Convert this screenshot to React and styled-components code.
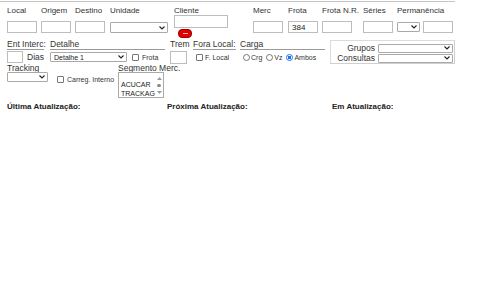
import React from "react";
import styled, { createGlobalStyle } from "styled-components";

const GlobalStyle = createGlobalStyle`
  html, body { margin: 0; padding: 0; background: #fff; }
  body {
    font-family: "Liberation Sans", Arial, sans-serif;
    font-size: 8px;
    color: #333;
  }
  * { box-sizing: border-box; }
`;

const TopLine = styled.div`
  width: 455px;
  height: 1px;
  margin-top: 1px;
  background: #c4c4c4;
`;

const Page = styled.div`
  padding-left: 7px;
`;

const Row = styled.div`
  display: flex;
  align-items: flex-start;
  margin-top: ${(p) => p.$mt || 0}px;
`;

const Cell = styled.div`
  flex: none;
  width: ${(p) => (p.$w ? `${p.$w}px` : "auto")};
  display: flex;
  flex-direction: column;
  align-items: flex-start;
`;

const Label = styled.div`
  height: 10px;
  line-height: 10px;
  white-space: nowrap;
`;

const Header = styled.div`
  height: 10px;
  line-height: 9px;
  white-space: nowrap;
  width: ${(p) => (p.$w ? `${p.$w}px` : "auto")};
  border-bottom: ${(p) => (p.$line ? "1px solid #9a9a9a" : "none")};
  font-size: 8.5px;
`;

const SmallLabel = styled.div`
  height: 8px;
  line-height: 8px;
  white-space: nowrap;
  font-size: 8.5px;
`;

const TextBox = styled.input`
  width: ${(p) => p.$w}px;
  height: ${(p) => p.$h || 12}px;
  margin-top: ${(p) => p.$mt || 0}px;
  border: 1px solid #bdbdbd;
  background: #fff;
  padding: 0 3px;
  font: 8px "Liberation Sans", Arial, sans-serif;
  color: #222;
  outline: none;
`;

const SelectBox = styled.div`
  width: ${(p) => p.$w}px;
  height: ${(p) => p.$h || 10}px;
  margin-top: ${(p) => p.$mt || 0}px;
  border: 1px solid #a9a9a9;
  border-radius: 1px;
  background: #fff;
  display: flex;
  align-items: center;
  justify-content: space-between;
  padding: 0 2px 0 3px;
  font-size: 7px;
  color: #222;
  flex: none;
`;

const Chevron = () => (
  <svg width="6" height="4" viewBox="0 0 6 4">
    <path d="M0.5 0.5 L3 3 L5.5 0.5" fill="none" stroke="#222" strokeWidth="1.1" />
  </svg>
);

const Select = ({ w, h, mt, children }) => (
  <SelectBox $w={w} $h={h} $mt={mt}>
    <span>{children}</span>
    <Chevron />
  </SelectBox>
);

const RedButton = styled.div`
  width: 14px;
  height: 9px;
  margin-top: 1px;
  margin-left: 4px;
  border-radius: 4px;
  background: #e00000;
  border: 1px solid #a00000;
  display: flex;
  align-items: center;
  justify-content: center;
  &::after {
    content: "";
    width: 5px;
    height: 1px;
    background: #ffb0b0;
  }
`;

const PairRow = styled.div`
  display: flex;
  gap: 3px;
  margin-top: 5px;
  align-items: center;
`;

const Controls = styled.div`
  height: 14px;
  display: flex;
  align-items: center;
  white-space: nowrap;
`;

const Check = styled.span`
  flex: none;
  width: 7px;
  height: 7px;
  border: 1px solid #767676;
  border-radius: 1px;
  background: #fff;
  margin-left: ${(p) => p.$ml || 0}px;
`;

const Radio = styled.span`
  flex: none;
  width: 7px;
  height: 7px;
  border-radius: 50%;
  border: 1px solid ${(p) => (p.$on ? "#1a73e8" : "#767676")};
  background: ${(p) => (p.$on ? "radial-gradient(circle, #1a73e8 0 1.6px, #fff 2px)" : "#fff")};
  margin-left: ${(p) => p.$ml || 0}px;
`;

const Small = styled.span`
  font-size: 7px;
  margin-left: ${(p) => p.$ml || 0}px;
  color: #333;
`;

const Text = styled.span`
  font-size: 8.5px;
  margin-left: ${(p) => p.$ml || 0}px;
`;

const GroupBox = styled.div`
  width: 125px;
  height: 24px;
  border: 1px solid #dcdcdc;
  border-right-color: #cfcfcf;
  border-bottom-color: #cfcfcf;
  padding: 2px 1px 0 0;
  display: flex;
  flex-direction: column;
`;

const GroupRow = styled.div`
  display: flex;
  align-items: center;
  height: 10px;
`;

const GroupLabel = styled.span`
  width: 45px;
  text-align: right;
  padding-right: 0;
  margin-right: 3px;
  font-size: 8.5px;
  line-height: 9px;
`;

const ListBox = styled.div`
  width: 46px;
  height: 26px;
  border: 1px solid #a9a9a9;
  background: #fff;
  display: flex;
`;

const ListItems = styled.div`
  flex: 1;
  padding: 7px 0 0 2px;
  font-size: 7px;
  line-height: 9px;
  color: #222;
`;

const ScrollBar = styled.div`
  width: 8px;
  display: flex;
  flex-direction: column;
  align-items: center;
  justify-content: space-between;
  padding: 4px 0 3px;
`;

const ScrollThumb = styled.span`
  width: 4px;
  height: 3px;
  border-radius: 2px;
  background: #8a8a8a;
`;

const Arrow = ({ up }) => (
  <svg width="5" height="3" viewBox="0 0 5 3">
    <path d={up ? "M0 3 L2.5 0 L5 3 Z" : "M0 0 L2.5 3 L5 0 Z"} fill="#9a9a9a" />
  </svg>
);

const BoldLabel = styled.div`
  flex: none;
  width: ${(p) => (p.$w ? `${p.$w}px` : "auto")};
  font-weight: bold;
  font-size: 8px;
  line-height: 10px;
  color: #222;
`;

const top = [
  { label: "Local", w: 34 },
  { label: "Origem", w: 34 },
  { label: "Destino", w: 35 },
];

export default function App() {
  return (
    <>
      <GlobalStyle />
      <TopLine />
      <Page>
        <Row $mt={4}>
          {top.map((f) => (
            <Cell key={f.label} $w={f.w}>
              <Label>{f.label}</Label>
              <TextBox $w={30} $mt={5} readOnly />
            </Cell>
          ))}
          <Cell $w={64}>
            <Label>Unidade</Label>
            <Select w={58} h={11} mt={6} />
          </Cell>
          <Cell $w={79}>
            <Label>Cliente</Label>
            <TextBox $w={54} $h={13} $mt={-1} readOnly />
            <RedButton />
          </Cell>
          <Cell $w={35}>
            <Label>Merc</Label>
            <TextBox $w={30} $mt={5} readOnly />
          </Cell>
          <Cell $w={34}>
            <Label>Frota</Label>
            <TextBox $w={30} $mt={5} value="384" readOnly />
          </Cell>
          <Cell $w={41}>
            <Label>Frota N.R.</Label>
            <TextBox $w={30} $mt={5} readOnly />
          </Cell>
          <Cell $w={34}>
            <Label>Séries</Label>
            <TextBox $w={30} $mt={5} readOnly />
          </Cell>
          <Cell>
            <Label>Permanência</Label>
            <PairRow>
              <Select w={23} h={10} />
              <TextBox $w={30} readOnly />
            </PairRow>
          </Cell>
        </Row>

        <Row $mt={2}>
          <Cell $w={43}>
            <Header $w={37} $line>Ent Interc:</Header>
            <Controls>
              <TextBox $w={16} readOnly />
              <Text $ml={4}>Dias</Text>
            </Controls>
          </Cell>
          <Cell $w={120}>
            <Header $w={115} $line>Detalhe</Header>
            <Controls>
              <Select w={77} h={10}>Detalhe 1</Select>
              <Check $ml={5} />
              <Small $ml={3}>Frota</Small>
            </Controls>
          </Cell>
          <Cell $w={23}>
            <Header>Trem</Header>
            <Controls>
              <TextBox $w={17} $h={13} readOnly />
            </Controls>
          </Cell>
          <Cell $w={47}>
            <Header $w={43} $line>Fora Local:</Header>
            <Controls>
              <Check $ml={3} />
              <Small $ml={2}>F. Local</Small>
            </Controls>
          </Cell>
          <Cell $w={90}>
            <Header $w={85} $line>Carga</Header>
            <Controls>
              <Radio $ml={3} />
              <Small $ml={1}>Crg</Small>
              <Radio $ml={4} />
              <Small $ml={1}>Vz</Small>
              <Radio $ml={4} $on />
              <Small $ml={1}>Ambos</Small>
            </Controls>
          </Cell>
          <GroupBox>
            <GroupRow>
              <GroupLabel>Grupos</GroupLabel>
              <Select w={75} h={9} />
            </GroupRow>
            <GroupRow>
              <GroupLabel>Consultas</GroupLabel>
              <Select w={75} h={9} />
            </GroupRow>
          </GroupBox>
        </Row>

        <Row>
          <Cell $w={50}>
            <SmallLabel>Tracking</SmallLabel>
            <Select w={41} h={10} />
          </Cell>
          <Cell $w={61}>
            <SmallLabel />
            <Controls>
              <Check />
              <Small $ml={3}>Carreg. Interno</Small>
            </Controls>
          </Cell>
          <Cell>
            <SmallLabel>Segmento Merc.</SmallLabel>
            <ListBox>
              <ListItems>
                <div>ACUCAR</div>
                <div>TRACKAG</div>
              </ListItems>
              <ScrollBar>
                <Arrow up />
                <ScrollThumb />
                <Arrow />
              </ScrollBar>
            </ListBox>
          </Cell>
        </Row>

        <Row $mt={4}>
          <BoldLabel $w={160}>Última Atualização:</BoldLabel>
          <BoldLabel $w={165}>Próxima Atualização:</BoldLabel>
          <BoldLabel>Em Atualização:</BoldLabel>
        </Row>
      </Page>
    </>
  );
}
